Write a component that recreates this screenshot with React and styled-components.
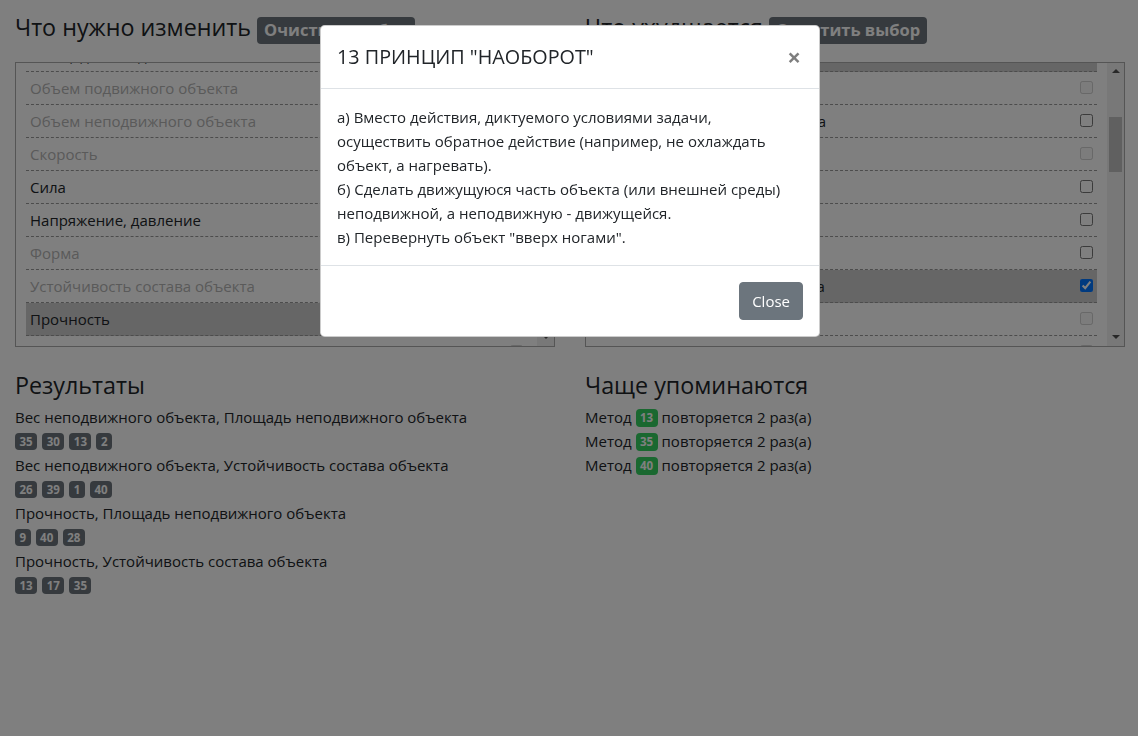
import styled, { createGlobalStyle } from "styled-components";
import { useLayoutEffect, useRef } from "react";

const params = [
  "Вес подвижного объекта",
  "Вес неподвижного объекта",
  "Длина подвижного объекта",
  "Длина неподвижного объекта",
  "Площадь подвижного объекта",
  "Площадь неподвижного объекта",
  "Объем подвижного объекта",
  "Объем неподвижного объекта",
  "Скорость",
  "Сила",
  "Напряжение, давление",
  "Форма",
  "Устойчивость состава объекта",
  "Прочность",
  "Продолжительность действия подвижного объекта",
  "Продолжительность действия неподвижного объекта",
  "Температура",
  "Яркость освещения",
  "Энергия, расходуемая подвижным объектом",
  "Энергия, расходуемая неподвижным объектом",
  "Мощность",
  "Потери энергии",
  "Потери вещества",
  "Потери информации",
  "Потери времени",
  "Количество вещества",
  "Надежность",
  "Точность измерения",
  "Точность изготовления",
  "Вредные факторы, действующие на объект",
  "Вредные факторы, генерируемые самим объектом",
  "Удобство изготовления",
  "Удобство эксплуатации",
  "Удобство ремонта",
  "Адаптация, универсальность",
  "Сложность устройства",
  "Сложность контроля и измерения",
  "Степень автоматизации",
  "Производительность",
];

// 1-based indexes
const leftSelected = [2, 14];
const leftDisabled = [7, 8, 9, 12, 13, 15, 16];
const rightSelected = [6, 13];
const rightDisabled = [7, 9, 14, 15];

const results = [
  { title: "Вес неподвижного объекта, Площадь неподвижного объекта", nums: [35, 30, 13, 2] },
  { title: "Вес неподвижного объекта, Устойчивость состава объекта", nums: [26, 39, 1, 40] },
  { title: "Прочность, Площадь неподвижного объекта", nums: [9, 40, 28] },
  { title: "Прочность, Устойчивость состава объекта", nums: [13, 17, 35] },
];

const frequent = [13, 35, 40];

const ROW_H = 33;
const VIEW_H = 283;
const TRACK_H = VIEW_H - 34;
const SCROLL = 189;

const GlobalStyle = createGlobalStyle`
  body {
    margin: 0;
    font-family: "Open Sans", "Noto Sans", sans-serif;
    font-size: 15px;
    line-height: 24px;
    color: #212529;
    background: #fff;
    overflow: hidden;
  }
`;

function ParamList({ selected, disabled }) {
  const ref = useRef(null);
  useLayoutEffect(() => {
    if (ref.current) ref.current.scrollTop = SCROLL;
  }, []);
  const contentH = params.length * ROW_H;
  const thumbH = (TRACK_H * VIEW_H) / contentH;
  const thumbTop = (TRACK_H * SCROLL) / contentH + 1;
  return (
    <ListBox>
      <Viewport ref={ref}>
        {params.map((p, i) => {
          const n = i + 1;
          const isSel = selected.includes(n);
          const isOff = disabled.includes(n);
          return (
            <Row key={n} $selected={isSel} $disabled={isOff}>
              <span>{p}</span>
              <Check type="checkbox" checked={isSel} disabled={isOff} readOnly />
            </Row>
          );
        })}
      </Viewport>
      <ScrollBar>
        <Arrow $down={false} />
        <Track>
          <Thumb style={{ marginTop: thumbTop, height: thumbH }} />
        </Track>
        <Arrow $down />
      </ScrollBar>
    </ListBox>
  );
}

export default function App() {
  return (
    <>
      <GlobalStyle />
      <Page>
        <Grid>
          <Column>
            <Heading>
              Что нужно изменить <Badge>Очистить выбор</Badge>
            </Heading>
            <ParamList selected={leftSelected} disabled={leftDisabled} />
          </Column>
          <Column>
            <Heading>
              Что ухудшается <Badge>Очистить выбор</Badge>
            </Heading>
            <ParamList selected={rightSelected} disabled={rightDisabled} />
          </Column>
          <Column>
            <SubHeading>Результаты</SubHeading>
            {results.map((r, i) => (
              <div key={i}>
                <div>{r.title}</div>
                <Badges>
                  {r.nums.map((n, j) => (
                    <SmallBadge key={j}>{n}</SmallBadge>
                  ))}
                </Badges>
              </div>
            ))}
          </Column>
          <Column>
            <SubHeading>Чаще упоминаются</SubHeading>
            {frequent.map((n) => (
              <div key={n}>
                Метод <SmallBadge $green>{n}</SmallBadge> повторяется 2 раз(а)
              </div>
            ))}
          </Column>
        </Grid>
      </Page>

      <Backdrop />
      <Dialog>
        <ModalHeader>
          <ModalTitle>13 ПРИНЦИП "НАОБОРОТ"</ModalTitle>
          <CloseX>×</CloseX>
        </ModalHeader>
        <ModalBody>
          <Line>а) Вместо действия, диктуемого условиями задачи,</Line>
          <Line>осуществить обратное действие (например, не охлаждать</Line>
          <Line>объект, а нагревать).</Line>
          <Line>б) Сделать движущуюся часть объекта (или внешней среды)</Line>
          <Line>неподвижной, а неподвижную - движущейся.</Line>
          <Line>в) Перевернуть объект "вверх ногами".</Line>
        </ModalBody>
        <ModalFooter>
          <Button>Close</Button>
        </ModalFooter>
      </Dialog>
    </>
  );
}

const Page = styled.div`
  padding: 13px 13px 0 15px;
`;

const Grid = styled.div`
  display: grid;
  grid-template-columns: 540px 540px;
  column-gap: 30px;
  row-gap: 24px;
`;

const Column = styled.div`
  display: flex;
  flex-direction: column;
`;

const Heading = styled.h4`
  margin: 0 0 18px;
  font-size: 23.3px;
  font-weight: 500;
  line-height: 28.8px;
  white-space: nowrap;
`;

const SubHeading = styled.h4`
  margin: 0 0 6px;
  font-size: 23.3px;
  font-weight: 500;
  line-height: 28.8px;
`;

const Badge = styled.span`
  display: inline-block;
  padding: 5px 7px;
  font-size: 16.5px;
  font-weight: 700;
  line-height: 1;
  color: #fff;
  background: #6c757d;
  border-radius: 4px;
  vertical-align: baseline;
`;

const ListBox = styled.div`
  display: flex;
  height: 285px;
  box-sizing: border-box;
  border: 1px solid #aaa;
`;

const Viewport = styled.div`
  flex: 1;
  overflow: hidden;
  padding: 0 10px;
`;

const ScrollBar = styled.div`
  width: 17px;
  flex-shrink: 0;
  display: flex;
  flex-direction: column;
  background: #f1f1f1;
`;

const Arrow = styled.div`
  height: 17px;
  display: flex;
  align-items: center;
  justify-content: center;

  &::before {
    content: "";
    border-left: 4px solid transparent;
    border-right: 4px solid transparent;
    ${(p) => (p.$down ? "border-top: 4px solid #505050;" : "border-bottom: 4px solid #505050;")}
  }
`;

const Track = styled.div`
  flex: 1;
  display: flex;
  flex-direction: column;
  align-items: center;
`;

const Thumb = styled.div`
  width: 13px;
  background: #c1c1c1;
`;

const Row = styled.div`
  display: flex;
  align-items: center;
  justify-content: space-between;
  padding: 4px;
  border-bottom: 1px dashed #999;
  background: ${(p) => (p.$selected ? "#ccc" : "transparent")};
  color: ${(p) => (p.$disabled ? "#b4b4b4" : "#212529")};
  white-space: nowrap;
`;

const Check = styled.input`
  margin: 0 0 0 8px;
  width: 13px;
  height: 13px;
`;

const Badges = styled.div`
  display: flex;
  gap: 5px;
  align-items: center;
  height: 24px;
`;

const SmallBadge = styled.span`
  display: inline-block;
  padding: 3px 4.5px;
  font-size: 11.5px;
  font-weight: 700;
  line-height: 1;
  color: #fff;
  background: ${(p) => (p.$green ? "#34d160" : "#6c757d")};
  border-radius: 4px;
  vertical-align: 1px;
`;

const Backdrop = styled.div`
  position: fixed;
  inset: 0;
  background: rgba(0, 0, 0, 0.5);
`;

const Dialog = styled.div`
  position: fixed;
  top: 25px;
  left: calc(50% - 249px);
  width: 500px;
  box-sizing: border-box;
  background: #fff;
  border: 1px solid rgba(0, 0, 0, 0.2);
  border-radius: 4.8px;
  display: flex;
  flex-direction: column;
`;

const ModalHeader = styled.div`
  display: flex;
  align-items: flex-start;
  justify-content: space-between;
  padding: 16px;
  border-bottom: 1px solid #dee2e6;
`;

const ModalTitle = styled.h5`
  margin: 0;
  font-size: 19.8px;
  font-weight: 500;
  line-height: 30px;
`;

const CloseX = styled.span`
  font-size: 24px;
  font-weight: 700;
  line-height: 30px;
  color: #000;
  opacity: 0.5;
  margin-right: 2px;
`;

const ModalBody = styled.div`
  padding: 16px;
`;

const Line = styled.div`
  white-space: nowrap;
`;

const ModalFooter = styled.div`
  display: flex;
  justify-content: flex-end;
  padding: 16px;
  border-top: 1px solid #dee2e6;
`;

const Button = styled.button`
  height: 38px;
  padding: 0 12px;
  font-family: inherit;
  font-size: 15px;
  color: #fff;
  background: #6c757d;
  border: 1px solid #6c757d;
  border-radius: 4px;
`;
